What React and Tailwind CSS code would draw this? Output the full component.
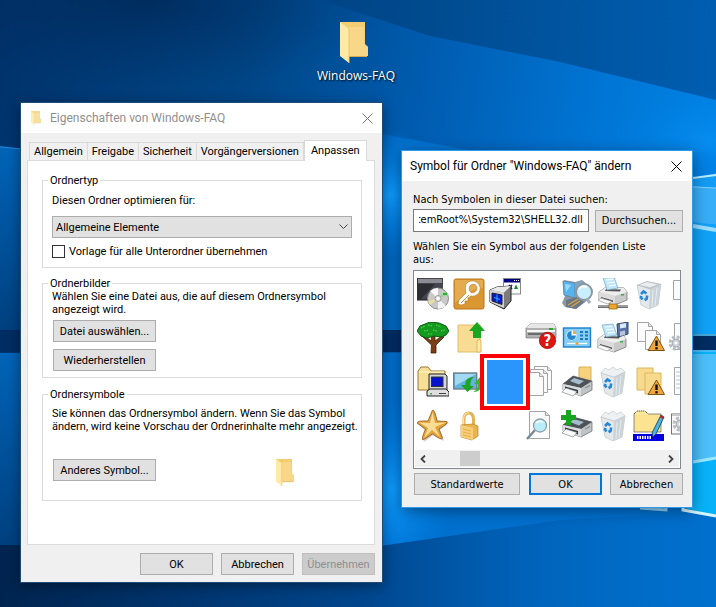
import { useEffect, useRef, useState } from "react";
import clsx from "clsx";

const TITLE_FONT = "font-[Roboto,'Noto_Sans',sans-serif]";
const LABEL_FONT = "font-['Open_Sans','Noto_Sans',sans-serif]";
const DIALOG_FONT = "font-[Roboto,'Liberation_Sans',sans-serif]";
const TAHOMA_FONT = "font-['DejaVu_Sans_Condensed','DejaVu_Sans',sans-serif]";

// ─── Wallpaper ────────────────────────────────────────────
const Wallpaper = () => (
  <svg
    className="absolute inset-0 h-full w-full"
    viewBox="0 0 716 607"
    preserveAspectRatio="none"
    aria-hidden="true"
  >
    <defs>
      <linearGradient id="sky" x1="0" y1="0" x2="1" y2="0.15">
        <stop offset="0" stopColor="#00326a" />
        <stop offset="0.35" stopColor="#004585" />
        <stop offset="0.6" stopColor="#005cb0" />
        <stop offset="0.85" stopColor="#0076d6" />
        <stop offset="1" stopColor="#0082e4" />
      </linearGradient>
      <linearGradient id="topShade" x1="0" y1="0" x2="1" y2="0">
        <stop offset="0" stopColor="#003a76" stopOpacity="0" />
        <stop offset="0.35" stopColor="#00427f" stopOpacity="0.7" />
        <stop offset="1" stopColor="#005bad" stopOpacity="0.95" />
      </linearGradient>
      <radialGradient id="cornerShade">
        <stop offset="0" stopColor="#00214c" stopOpacity="0.6" />
        <stop offset="1" stopColor="#002a5c" stopOpacity="0" />
      </radialGradient>
      <linearGradient id="floor" x1="0" y1="0" x2="1" y2="0">
        <stop offset="0" stopColor="#00244f" />
        <stop offset="0.5" stopColor="#00458c" />
        <stop offset="0.75" stopColor="#0062b8" stopOpacity="0.85" />
        <stop offset="1" stopColor="#006fcc" stopOpacity="0.4" />
      </linearGradient>
      <linearGradient id="leftGlow" x1="0" y1="0" x2="0" y2="1">
        <stop offset="0" stopColor="#0064b8" />
        <stop offset="1" stopColor="#00407f" />
      </linearGradient>
      <linearGradient id="horizon" x1="0" y1="0" x2="1" y2="0">
        <stop offset="0" stopColor="#0060b4" />
        <stop offset="0.15" stopColor="#0072d0" />
        <stop offset="1" stopColor="#007ee2" />
      </linearGradient>
      <radialGradient id="glow">
        <stop offset="0" stopColor="#0f9cff" />
        <stop offset="1" stopColor="#0080e8" stopOpacity="0" />
      </radialGradient>
    </defs>
    <rect width="716" height="607" fill="url(#sky)" />
    <ellipse cx="150" cy="0" rx="240" ry="90" fill="url(#cornerShade)" />
    <path d="M220 0H716V100L560 62L430 36L320 0Z" fill="url(#topShade)" />
    <path d="M0 146L380 190V330H0Z" fill="url(#leftGlow)" />
    <path d="M0 147L22 149" stroke="#2484d4" />
    <path d="M370 132L480 152H716V334H370Z" fill="url(#horizon)" />
    <ellipse cx="390" cy="195" rx="60" ry="65" fill="url(#glow)" />
    <ellipse cx="710" cy="140" rx="100" ry="50" fill="url(#glow)" opacity="0.4" />
    <path d="M0 353H716V607H0Z" fill="#0070ce" />
    <ellipse cx="392" cy="490" rx="60" ry="90" fill="url(#glow)" />
    <path d="M0 353H30V545H0Z" fill="url(#leftGlow)" />
    <path d="M0 545L380 546L560 520L716 512V607H0Z" fill="url(#floor)" />
    <path d="M0 330H400L716 334V350L400 352H0Z" fill="#002d64" />
    {/* window panes glowing behind the dialogs */}
    <path d="M684 180L716 173V334H684Z" fill="#139cf4" />
    <path d="M693 186L716 188V225L693 222Z" fill="#38adf8" />
    <path d="M693 224H716V334H693Z" fill="#0fa2f8" />
    <path d="M684 352H716V516L684 508Z" fill="#08b2f8" />
    <path d="M693 354H716V458L693 462Z" fill="#4cc0fa" />
    <path d="M693 178L716 175" stroke="#bcecff" strokeWidth="2" />
    <path d="M693 187L716 188" stroke="#7fd0ff" />
    <path d="M693 226L716 230" stroke="#9ddcff" strokeWidth="4" />
    <path d="M693 335H716M693 351H716" stroke="#5cd0ff" strokeWidth="1.5" />
    <path d="M693 462L716 458" stroke="#9ce9ff" strokeWidth="3" />
    <path d="M683 503V510L716 516" stroke="#d9f6ff" strokeWidth="3" fill="none" />
    <path d="M640 508L666 510V504" stroke="#8ed2fb" strokeWidth="3" fill="none" />
  </svg>
);

// ─── Folder used on the desktop, title bar and preview ────
const FolderIcon = ({ className, dim }) => (
  <svg
    viewBox="0 0 28 41"
    preserveAspectRatio="none"
    className={clsx(className, dim && "opacity-80")}
    aria-hidden="true"
  >
    <path d="M0 0H25V22L28 25V34H0Z" fill="#f3cd72" />
    <path d="M9 5H24V22L28 25V34H9Z" fill="#f8d888" />
    <path d="M9 34.500H27" stroke="#d5ac50" />
    <path d="M0 0L9 7V41L0 34Z" fill="#ffe9a6" />
    <path d="M9 7V41" stroke="#e9c468" />
  </svg>
);

// ─── Shared pieces of the icon list ───────────────────────
const Glyph = ({ children }) => (
  <svg viewBox="0 0 32 32" className="h-8 w-8 shrink-0" aria-hidden="true">
    {children}
  </svg>
);

const Page = ({ x = 0, y = 0, w = 16, h = 20 }) => (
  <g transform={`translate(${x} ${y})`}>
    <path d={`M.5.500H${w - 4.5}L${w - 0.5} 4.500V${h - 0.5}H.5Z`} fill="#fbfbfb" stroke="#a4a4a4" />
    <path d={`M${w - 4.5}.500V4.500H${w - 0.5}`} fill="#e4e4e4" stroke="#a4a4a4" />
  </g>
);

const Warning = () => (
  <g>
    <path d="M23.500 14L31.500 28.500H15Z" fill="#f0a63c" stroke="#7d5518" strokeLinejoin="round" />
    <path d="M23.500 18.500V24" stroke="#111" strokeWidth="2.4" />
    <rect x="22.300" y="25.200" width="2.400" height="2.200" fill="#111" />
  </g>
);

const Bin = ({ full }) => (
  <Glyph>
    <path d="M4 7L17 11L28 6L25 27L16 31L8 27Z" fill="#e3e8ec" stroke="#c3c9cf" strokeWidth=".8" />
    <path d="M17 11L28 6L25 27L16 31Z" fill="#cbd3d9" />
    <path d="M4 7L14 3L28 6L17 11Z" fill="#b4bcc3" />
    {full ? (
      <path d="M4 7L8 2L12 4L16 1L20 4L24 2L28 6L17 11Z" fill="#eef1f3" stroke="#c3c9ce" strokeWidth=".7" />
    ) : (
      <path d="M6 7L14 4L25 6.500L17 9.500Z" fill="#e9edf0" />
    )}
    <path d="M20 12L19 29M24 10L22 28" stroke="#edf1f4" strokeWidth=".8" />
    <g fill="none" stroke="#2286da" strokeWidth="2.600">
      <path d="M8 16L10.500 13.500L13.500 15.500" />
      <path d="M14.200 17.500L13.500 21L11.500 22" />
      <path d="M9.500 21.500L8 19.500L8.500 18" />
    </g>
  </Glyph>
);

const PrinterBody = () => (
  <g>
    <path d="M2 15L9 10L27 11L30 15V23L18 28L2 23Z" fill="#c9c9c9" stroke="#777" strokeWidth=".8" />
    <path d="M2 15L9 10L27 11L30 15L18 19Z" fill="#eeeeee" />
    <path d="M9 12L24 12.500L23 14.500L8 14Z" fill="#555" />
    <path d="M6 1L17 0L21 11L10 13Z" fill="#bfe6fa" stroke="#78a9c6" strokeWidth=".7" />
    <path d="M9 3L16 2.500M10 6L18 5M12 9L19 8" stroke="#fff" />
    <path d="M2 15L18 19V28L2 23Z" fill="#dcdcdc" />
    <path d="M4 20L16 23.500V25L4 21.500Z" fill="#4e4e4e" />
    <path d="M4 21L15 24.500L11 27L1 23.500Z" fill="#fafafa" stroke="#8b8b8b" strokeWidth=".6" />
    <rect x="24" y="17" width="3" height="1.500" fill="#3cb043" />
  </g>
);

const SmallPrinter = () => (
  <g>
    <path d="M2 18L12 10L31 15V24L20 30L2 24Z" fill="#bfc3c6" stroke="#62666a" strokeWidth=".7" />
    <path d="M2 18L12 10L31 15L20 22Z" fill="#4d5256" />
    <path d="M9 15L13 12L23 15L18 18.500Z" fill="#a4bccb" />
    <path d="M2 18L20 22V30L2 24Z" fill="#d9dcde" />
    <path d="M4 20.500L17 24V27.500L4 23.500Z" fill="#35393c" />
    <path d="M5 22L16 25.500L12 30L1 26Z" fill="#f7f9fb" stroke="#777" strokeWidth=".6" />
    <path d="M24 22L29 19.500" stroke="#7b7f82" />
  </g>
);

const Gear = ({ cx, cy }) => (
  <g>
    <circle cx={cx} cy={cy} r="6" fill="none" stroke="#b5bcc1" strokeWidth="3" strokeDasharray="3 1.700" />
    <circle cx={cx} cy={cy} r="4" fill="#ccd2d6" stroke="#a5adb2" />
    <circle cx={cx} cy={cy} r="1.500" fill="#fff" />
  </g>
);

const DiscDrive = () => (
  <Glyph>
    <path d="M0 0H26V22H0Z" fill="#45464d" />
    <path d="M1 1H25V5H1Z" fill="#8a8b93" />
    <path d="M1 6H18L4 21H1Z" fill="#2c2d33" />
    <path d="M0 0V22H26" fill="none" stroke="#1b1b20" />
    <circle cx="21" cy="20.500" r="10.500" fill="#c9c9c9" stroke="#8a8a8a" />
    <path d="M21 20.500L13 13A11 11 0 0 1 21 10Z" fill="#f8f8f8" />
    <path d="M21 20.500L29 28A11 11 0 0 1 21 31Z" fill="#f2f2f2" />
    <path d="M21 20.500L31 17A11 11 0 0 0 28 13Z" fill="#9ad895" />
    <path d="M21 20.500L11 23A11 11 0 0 0 13 27Z" fill="#e8e0a0" />
    <circle cx="21" cy="20.500" r="3" fill="#e9e9e9" stroke="#999" />
    <circle cx="21" cy="20.500" r="1.200" fill="#fff" />
    <rect x="26" y="15" width="4" height="2" fill="#23b42a" />
  </Glyph>
);

const KeyTile = () => (
  <Glyph>
    <rect x="1" y="1" width="30" height="30" rx="2" fill="#d99631" stroke="#bb7719" />
    <path d="M2 2H30V10Q15 11 2 25Z" fill="#e8b45c" opacity=".7" />
    <path
      fillRule="evenodd"
      d="M14 5C18 1 26 3 27 9C28 15 23 19 18 18L15 20L15 23L12 23L12 26L8 27L5 26L6 22L13 15C12 11 12 7 14 5ZM17 8C15.500 10 16 13 18 14.500C21 15.500 24 13 24 10C24 6 19 5 17 8Z"
      fill="#fff"
      stroke="#b97a24"
      strokeWidth=".6"
    />
    <path d="M8 25L16 17" stroke="#cf8d2d" />
  </Glyph>
);

const MonitorWindow = () => (
  <Glyph>
    <rect x="14.500" y=".5" width="17" height="15.500" fill="#fff" stroke="#888" />
    <rect x="15" y="1" width="16" height="3.500" fill="#000080" />
    <path d="M25 2.500H30" stroke="#fff" strokeDasharray="1 1" />
    <path d="M20 7L23 11M23 7L20 11" stroke="#1717c8" strokeWidth="1.500" />
    <path d="M27 6.500L29 11H25Z" fill="#118a22" />
    <path d="M1 12L8 9L22 8V23L15 31L1 24Z" fill="#7b7b7b" stroke="#222" />
    <path d="M1 12L15 14.500V30L1 24Z" fill="#d3d3d3" />
    <path d="M1 12L8 9L22 8L15 14.500Z" fill="#e9e9e9" />
    <path d="M3 15L13 17V26.500L3 23Z" fill="#0a18d6" stroke="#222" />
    <path d="M8 16.500V24M5 19.500L11 21.500" stroke="#29d5ef" strokeWidth=".8" />
  </Glyph>
);

const ComputerSearch = () => (
  <Glyph>
    <path d="M3 2L14 4L21 2L27 7V22L15 31L4 29L1 25L4 18Z" fill="#8b98a5" />
    <path d="M2 3L14 5V20L3 17Z" fill="#55b4ef" stroke="#6c879b" />
    <path d="M14 5L21 3V18L14 20Z" fill="#7ea7c4" />
    <path d="M4 6L10 7L5 14Z" fill="#a0d8f8" />
    <path d="M5 22L16 19L23 24L15 31L5 29Z" fill="#6a7886" />
    <path d="M7 27L17 21M10 29L19 23" stroke="#e1a33b" strokeWidth="1.200" />
    <circle cx="23" cy="14" r="8" fill="#c9effc" stroke="#8a96a1" strokeWidth="2" />
    <path d="M18 11Q21 7 26 9" stroke="#fff" strokeWidth="2" fill="none" />
    <path d="M26 21L29 25" stroke="#a3afb9" strokeWidth="3" />
  </Glyph>
);

const NetworkPrinter = () => (
  <Glyph>
    <g transform="translate(0 -1)">
      <PrinterBody />
    </g>
    <path d="M1 28.500H31" stroke="#6d6d6d" strokeWidth="3" />
    <path d="M1 28H31" stroke="#d0d0d0" />
    <rect x="12" y="26" width="8" height="5" fill="#efa62b" stroke="#8c6115" strokeWidth=".7" />
  </Glyph>
);

const Tree = () => (
  <Glyph>
    <path d="M14 31L14.500 23L5 14L7 13L14 19L15 12H18V19L26 13L27 15L19 23L19 31Z" fill="#7a3f17" stroke="#402008" strokeWidth=".8" />
    <path d="M0 9L3 4L8 2L13 0L22 1L29 4L32 9L29 13L24 15L17 14L10 16L4 14Z" fill="#149a1e" stroke="#08600e" />
    <path d="M4 6L8 4M11 3L16 4M19 3L24 5M7 9L12 8M16 8L20 9M24 9L28 8M11 12L15 12" stroke="#59d34e" strokeWidth="1.200" strokeDasharray="1.500 1" />
  </Glyph>
);

const FolderUp = () => (
  <Glyph>
    <path d="M5 3H27V30H5Z" fill="#f9dc94" stroke="#e2bd66" />
    <path d="M24 19L27 17L28 20V30H24Z" fill="#ffe9b1" stroke="#dfb75c" />
    <path d="M24 0L32 9H28V16H20V9H16Z" fill="#18a81f" />
  </Glyph>
);

const UnknownDrive = () => (
  <Glyph>
    <path d="M5 2H29L31 6V16H1V6Z" fill="#b0b0b0" stroke="#777" strokeWidth=".7" />
    <path d="M5 2H29L31 6H1Z" fill="#e6e6e6" />
    <path d="M2 8H30V10H2Z" fill="#f7f7f7" />
    <path d="M3 12H18" stroke="#555" strokeWidth="1.500" />
    <rect x="24" y="6" width="4" height="2" fill="#22aa29" />
    <circle cx="22.500" cy="18.500" r="8.200" fill="#dc1413" stroke="#a20c0c" strokeWidth=".7" />
    <text x="22.500" y="24" textAnchor="middle" fontSize="15" fontWeight="700" fill="#fff">
      ?
    </text>
  </Glyph>
);

const ControlPanel = () => (
  <Glyph>
    <rect x="2.500" y="6" width="27" height="19" fill="#86cef8" stroke="#1b80c8" strokeWidth="1.400" />
    <circle cx="10.500" cy="13.500" r="5" fill="#fff" />
    <path d="M10.500 13.500V9A4.500 4.500 0 1 0 15 13.500Z" fill="#2387cf" />
    <path d="M12 12V8.500A4 4 0 0 1 15.500 12Z" fill="#f2aa3d" />
    <path d="M19 10H22M24 10H27M19 13.500H22M24 13.500H27M19 17H22M24 17H27" stroke="#1c78ba" strokeWidth="2" />
    <path d="M6 21.500H26" stroke="#fff" strokeWidth="1.200" />
    <circle cx="16" cy="21.500" r="1.500" fill="#e9a13a" />
  </Glyph>
);

const FilePrinter = () => (
  <Glyph>
    <g transform="translate(-1 2)">
      <PrinterBody />
    </g>
    <path d="M20 2L31 0V12L21 15Z" fill="#5472a8" stroke="#33466e" />
    <path d="M23 2V6.500L29 5.500V1Z" fill="#dce8f5" />
    <path d="M23 14V9.500L28 8.500V13Z" fill="#b9c4d6" />
  </Glyph>
);

const PagesWarning = () => (
  <Glyph>
    <Page x={4} y={0} />
    <Page x={12} y={8} />
    <Warning />
  </Glyph>
);

const FolderComputer = () => (
  <Glyph>
    <path d="M1 5L4 1H11L14 5H28V24H1Z" fill="#f7df95" stroke="#98793a" />
    <path d="M2 6H27" stroke="#fff6cf" />
    <path d="M12 8H28L30 10V24H12Z" fill="#d6d6d6" stroke="#222" />
    <rect x="14.500" y="11" width="11.500" height="9.500" fill="#0713cc" stroke="#333" />
    <path d="M10 25L13 23H29L32 26V30H10Z" fill="#dedede" stroke="#222" />
    <path d="M22 27.500H29" stroke="#444" />
    <rect x="13" y="27" width="2" height="1.500" fill="#2fb533" />
  </Glyph>
);

const ScreenRefresh = () => (
  <Glyph>
    <rect x=".7" y="7" width="23" height="16" fill="#62b3df" stroke="#71818c" strokeWidth="1.400" />
    <path d="M2 8H23L2 20Z" fill="#a3d9f1" />
    <path d="M21 11C14 11 12 15 12.500 19H8L14.500 26L21 20H17.500C17 16 18 13 21 11Z" fill="#1ba622" />
    <path d="M20 26C27 26 29 22 28 18H32L27 11L21 18H24.500C25 22 23.500 24 20 26Z" fill="#30b736" />
  </Glyph>
);

const PageStack = () => (
  <Glyph>
    <Page x={9} y={0} w={18} h={24} />
    <Page x={5} y={3} w={18} h={24} />
    <Page x={1} y={6} w={18} h={24} />
  </Glyph>
);

const PrinterFolder = () => (
  <Glyph>
    <path d="M18 1H30V16L31 19H18Z" fill="#f6d27c" stroke="#dcaf52" />
    <SmallPrinter />
  </Glyph>
);

const FoldersWarning = () => (
  <Glyph>
    <path d="M4 2H20V24H4Z" fill="#f8da8f" stroke="#ddb65c" />
    <path d="M12 7H28V28H12Z" fill="#f8da8f" stroke="#ddb65c" />
    <Warning />
  </Glyph>
);

const Star = () => (
  <Glyph>
    <path d="M17 2L21 12L32 13L23 20L27 31L16 25L7 32L9 21L1 14L12 12Z" fill="#999" opacity=".5" />
    <path d="M15.500 0Q18 0 20 11L30 11.500Q32 13 22 19L25.500 28Q25 31 15.500 24L6 30Q4 29 8.500 19L0 13Q0 10.500 11 11Z" fill="#e2a23c" stroke="#8f5a16" strokeWidth=".8" />
    <path d="M15.500 2L18 13L29 12.500L18 17L23 27L15 20L7 28L11 18L2 12.500L13 13Z" fill="#fbdc95" />
  </Glyph>
);

const Padlock = () => (
  <Glyph>
    <path d="M11 17V9Q11 3 16 3Q20 3 20.500 9V17" fill="none" stroke="#e3b251" strokeWidth="3" />
    <path d="M10.500 17V9Q11 3 16 2.500" fill="none" stroke="#fae3a3" strokeWidth="1.200" />
    <path d="M8 15L20 14L25 16V26L19 30L8 27Z" fill="#e9b44d" stroke="#ba8124" strokeWidth=".7" />
    <path d="M8 15L20 18V30L8 27Z" fill="#f8cf77" />
    <path d="M10 19L18 21M10 22L18 24M10 25L18 27" stroke="#e5ae4c" />
  </Glyph>
);

const PageSearch = () => (
  <Glyph>
    <Page x={4} y={1} w={21} h={28} />
    <path d="M10 20L2 29" stroke="#758996" strokeWidth="2.400" />
    <circle cx="15" cy="15.500" r="6.500" fill="#b9edf9" stroke="#8da0ab" strokeWidth="1.300" />
    <path d="M11 13Q14 10 18 12" stroke="#fff" strokeWidth="1.500" fill="none" />
  </Glyph>
);

const PrinterAdd = () => (
  <Glyph>
    <g transform="translate(0 -3)">
      <SmallPrinter />
    </g>
    <path d="M5 0H10V5H15V10H10V15H5V10H0V5H5Z" fill="#17a51e" />
  </Glyph>
);

const FolderEdit = () => (
  <Glyph>
    <path d="M1 4L4 1H12L15 4H28V22H1Z" fill="#fbe79a" stroke="#222" strokeDasharray="1 1" />
    <path d="M2 5H26L24 21H2Z" fill="#fbe392" />
    <rect x="0" y="24" width="31" height="7" fill="#0000e0" />
    <path d="M4 27.500H19" stroke="#fff" strokeWidth="3" strokeDasharray="1.500 1" />
    <path d="M28 5L31 7L23 24L20 27L19 23Z" fill="#46b7e6" stroke="#16324d" strokeWidth=".8" />
    <path d="M28 5L31 7L30 9L27 7.500Z" fill="#cf1d1d" />
  </Glyph>
);

const PageEdge = () => (
  <Glyph>
    <Page x={4} y={2} w={22} h={20} />
  </Glyph>
);

const PageGear = () => (
  <Glyph>
    <Page x={5} y={1} w={20} h={27} />
    <Gear cx={7} cy={21} />
  </Glyph>
);

const PageText = () => (
  <Glyph>
    <Page x={5} y={1} w={22} h={28} />
    <path d="M7 6H20M7 10H22M7 14H22M7 18H22M7 22H22" stroke="#c4c4c4" />
  </Glyph>
);

const PageSettings = () => (
  <Glyph>
    <rect x="2.500" y="4" width="24" height="20" fill="#fafafa" stroke="#777" />
    <path d="M3 5H26" stroke="#c9c9c9" strokeWidth="2" />
    <Gear cx={11} cy={14} />
  </Glyph>
);

// rows of the list, column by column; null is an empty slot
const iconColumns = [
  [["Laufwerk mit Disc", DiscDrive], ["Baum", Tree], ["Netzwerkordner", FolderComputer], ["Stern", Star]],
  [["Schlüssel", KeyTile], ["Ordner nach oben", FolderUp], ["Aktualisieren", ScreenRefresh], ["Schloss", Padlock]],
  [["Programm", MonitorWindow], null, ["Leeres Symbol", null], null],
  [null, ["Unbekanntes Laufwerk", UnknownDrive], ["Dokumente", PageStack], ["Dokument suchen", PageSearch]],
  [["Computer suchen", ComputerSearch], ["Systemsteuerung", ControlPanel], ["Druckerordner", PrinterFolder], ["Drucker hinzufügen", PrinterAdd]],
  [["Netzwerkdrucker", NetworkPrinter], ["In Datei drucken", FilePrinter], ["Papierkorb voll", () => <Bin full />], ["Papierkorb gefüllt", () => <Bin full />]],
  [["Papierkorb", () => <Bin />], ["Dateikonflikt", PagesWarning], ["Ordnerkonflikt", FoldersWarning], ["Umbenennen", FolderEdit]],
  [["Seite", PageEdge], ["Einstellungsdatei", PageGear], ["Textdatei", PageText], ["Konfiguration", PageSettings]],
];

// ─── Controls ─────────────────────────────────────────────
const Button = ({ className, primary, children, ...rest }) => (
  <button
    type="button"
    className={clsx(
      "h-[22px] bg-[#e1e1e1] text-center text-black disabled:border-[#bfbfbf] disabled:bg-[#cccccc] disabled:text-[#8f8f8f]",
      primary ? "border-2 border-[#0078d7]" : "border border-[#adadad]",
      className
    )}
    {...rest}
  >
    {children}
  </button>
);

const CloseButton = ({ className }) => (
  <button type="button" aria-label="Schließen" className={className}>
    <svg viewBox="0 0 11 11" className="h-[11px] w-[11px]" aria-hidden="true">
      <path d="M.5.500L10.500 10.500M10.500.500L.5 10.500" stroke="currentColor" />
    </svg>
  </button>
);

const Group = ({ title, className, children }) => (
  <fieldset className={clsx("border border-[#dcdcdc] px-[9px]", className)}>
    <legend className="-ml-1 px-0.5">{title}</legend>
    {children}
  </fieldset>
);

const tabs = ["Allgemein", "Freigabe", "Sicherheit", "Vorgängerversionen", "Anpassen"];

// ─── Folder properties ────────────────────────────────────
const PropertiesDialog = () => {
  const [tab, setTab] = useState("Anpassen");

  return (
    <section
      className={clsx(
        "absolute left-5 top-[102px] w-[363px] border border-[#1f4b78] bg-[#f0f0f0] text-[11px] leading-[13px] text-black shadow-[0_3px_12px_rgba(0,0,0,0.4)]",
        DIALOG_FONT
      )}
    >
      <header className="flex h-[30px] items-center bg-white pl-2 pr-[9px]">
        <FolderIcon className="ml-0.5 h-3.5 w-2.5" dim />
        <h1 className={clsx("ml-[9px] flex-1 text-[12px] leading-4 text-[#8f8f8f]", TITLE_FONT)}>
          Eigenschaften von Windows-FAQ
        </h1>
        <CloseButton className="text-[#777]" />
      </header>

      <div className="pl-1.5 pr-[7px] pt-[7px]">
        <div role="tablist" className="flex items-end pl-0.5">
          {tabs.map((name) => (
            <button
              key={name}
              type="button"
              role="tab"
              aria-selected={tab === name}
              onClick={() => setTab(name)}
              className={clsx(
                "border-t border-r border-[#d9d9d9] first:border-l",
                tab === name ? "z-10 -mb-px h-[21px] border-l bg-white px-1.5 pb-0.5" : "h-[18px] px-1"
              )}
            >
              {name}
            </button>
          ))}
        </div>

        <div role="tabpanel" className="border border-[#dcdcdc] bg-white pb-[43px] pl-[14px] pr-3 pt-[13px]">
          <Group title="Ordnertyp" className="pb-[9px] pt-[7px]">
            <label htmlFor="optimize" className="block">
              Diesen Ordner optimieren für:
            </label>
            <div className="relative mt-[9px]">
              <select
                id="optimize"
                className="block h-[22px] w-full appearance-none border border-[#adadad] bg-[#e1e1e1] pl-[3px]"
              >
                <option>Allgemeine Elemente</option>
              </select>
              <svg
                viewBox="0 0 9 5"
                className="pointer-events-none absolute right-1 top-2 h-[5px] w-[9px]"
                aria-hidden="true"
              >
                <path d="M.5.500L4.500 4.500L8.500.500" fill="none" stroke="#444" />
              </svg>
            </div>
            <label className="mt-[7px] flex items-center gap-1">
              <input
                type="checkbox"
                className="h-[13px] w-[13px] appearance-none border border-[#333] bg-white checked:bg-[#0078d7]"
              />
              Vorlage für alle Unterordner übernehmen
            </label>
          </Group>

          <Group title="Ordnerbilder" className="mt-[9px] pb-[6px]">
            <p>Wählen Sie eine Datei aus, die auf diesem Ordnersymbol angezeigt wird.</p>
            <div className="mt-1 flex flex-col items-start gap-[7px] pl-px">
              <Button className="w-[103px]">Datei auswählen...</Button>
              <Button className="w-[103px]">Wiederherstellen</Button>
            </div>
          </Group>

          <Group title="Ordnersymbole" className="mt-[10px] pb-[14px] pt-[6px]">
            <p className="-mr-[9px]">
              Sie können das Ordnersymbol ändern. Wenn Sie das Symbol ändern, wird keine Vorschau
              der Ordnerinhalte mehr angezeigt.
            </p>
            <div className="mt-[26px] flex items-start pl-px">
              <Button className="w-[103px]">Anderes Symbol...</Button>
              <FolderIcon className="ml-[120px] h-[27px] w-[18px]" />
            </div>
          </Group>
        </div>
      </div>

      <footer className="flex justify-end gap-2 pb-[7px] pr-[7px] pt-2">
        <Button className="w-[73px]">OK</Button>
        <Button className="w-[73px]">Abbrechen</Button>
        <Button className="w-[73px]" disabled>
          Übernehmen
        </Button>
      </footer>
    </section>
  );
};

// ─── Change icon ──────────────────────────────────────────
const IconDialog = () => {
  const pathRef = useRef(null);
  const [selected, setSelected] = useState("Leeres Symbol");

  // keep the end of the path in view
  useEffect(() => {
    pathRef.current.scrollLeft = pathRef.current.scrollWidth;
  }, []);

  return (
    <section
      className={clsx(
        "absolute left-[401px] top-[150px] w-[292px] border border-[#2f9be8] bg-[#f0f0f0] text-[11px] leading-[13px] text-black shadow-[0_3px_14px_rgba(0,0,0,0.4)]",
        TAHOMA_FONT
      )}
    >
      <header className="flex h-[30px] items-center bg-white pl-2 pr-[10px]">
        <h2 className={clsx("flex-1 text-[12px] leading-4", TITLE_FONT)}>
          Symbol für Ordner "Windows-FAQ" ändern
        </h2>
        <CloseButton />
      </header>

      <div className="pb-3 pl-[11px] pr-[9px] pt-3">
        <label htmlFor="path" className="block">
          Nach Symbolen in dieser Datei suchen:
        </label>
        <div className="mt-[3px] flex items-center gap-1.5">
          <input
            id="path"
            ref={pathRef}
            defaultValue="%SystemRoot%\System32\SHELL32.dll"
            className="h-[23px] min-w-0 flex-1 border border-[#7a7a7a] bg-white px-[5px] pb-[3px]"
          />
          <Button className="w-[88px]">Durchsuchen...</Button>
        </div>

        <p className="mt-2 pr-6">Wählen Sie ein Symbol aus der folgenden Liste aus:</p>

        <div className="mr-0.5 mt-[4px] overflow-hidden border border-[#828790] bg-white p-px">
          <div role="listbox" aria-label="Symbole" className="grid w-max grid-flow-col grid-rows-4">
            {iconColumns.map((column, col) =>
              column.map((entry, row) => {
                if (!entry) return <span key={`${col}-${row}`} className="h-11 w-9" />;
                const [name, Icon] = entry;
                return (
                  <button
                    key={name}
                    type="button"
                    role="option"
                    aria-label={name}
                    aria-selected={selected === name}
                    onClick={() => setSelected(name)}
                    className="relative flex h-11 w-9 items-center justify-center"
                  >
                    {selected === name && (
                      <>
                        <span className="absolute -inset-x-[7px] -inset-y-[6px] z-10 border-4 border-[#fb0007] bg-white" />
                        <span className="absolute inset-0 z-10 bg-[#2a96fb]" />
                      </>
                    )}
                    {Icon && <Icon />}
                  </button>
                );
              })
            )}
          </div>
          <div className="mt-0.5 flex h-[17px] items-center bg-[#f0f0f0] px-[5px]">
            <button type="button" aria-label="Nach links">
              <svg viewBox="0 0 6 8" className="h-2 w-1.5" aria-hidden="true">
                <path d="M5 .5L1.500 4L5 7.500" fill="none" stroke="#404040" strokeWidth="1.800" />
              </svg>
            </button>
            <span className="ml-[34px] h-[15px] w-5 bg-[#cdcdcd]" />
            <button type="button" aria-label="Nach rechts" className="ml-auto">
              <svg viewBox="0 0 6 8" className="h-2 w-1.5" aria-hidden="true">
                <path d="M1 .5L4.500 4L1 7.500" fill="none" stroke="#404040" strokeWidth="1.800" />
              </svg>
            </button>
          </div>
        </div>

        <footer className="mt-1 flex pl-px">
          <Button className="w-[106px]">Standardwerte</Button>
          <Button className="ml-[9px] w-[73px]" primary>
            OK
          </Button>
          <Button className="ml-auto w-[73px]">Abbrechen</Button>
        </footer>
      </div>
    </section>
  );
};

export default function App() {
  return (
    <main className="relative min-h-screen w-full overflow-hidden bg-[#004a94]">
      <Wallpaper />
      <button
        type="button"
        className={clsx(
          "absolute left-[312px] top-[22px] flex w-[88px] flex-col items-center text-[12px] leading-4 text-white [text-shadow:1px_1px_2px_#000]",
          LABEL_FONT
        )}
      >
        <FolderIcon className="mr-1 h-[41px] w-7" />
        <span className="mt-[5px]">Windows-FAQ</span>
      </button>
      <PropertiesDialog />
      <IconDialog />
    </main>
  );
}
